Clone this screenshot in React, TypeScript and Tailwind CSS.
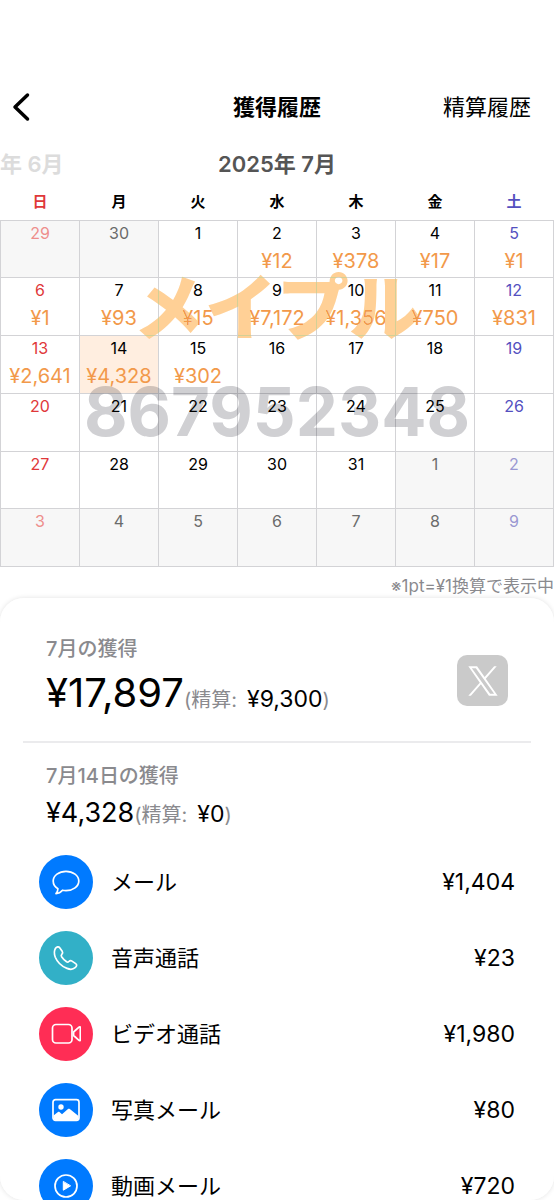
import { useState } from 'react';
import type { ReactNode } from 'react';

const WEEKDAYS = ['日', '月', '火', '水', '木', '金', '土'];

const WEEKS = [
  [29, 30, 1, 2, 3, 4, 5],
  [6, 7, 8, 9, 10, 11, 12],
  [13, 14, 15, 16, 17, 18, 19],
  [20, 21, 22, 23, 24, 25, 26],
  [27, 28, 29, 30, 31, 1, 2],
  [3, 4, 5, 6, 7, 8, 9],
];

const EARNINGS: Record<number, number> = {
  2: 12, 3: 378, 4: 17, 5: 1, 6: 1, 7: 93, 8: 15, 9: 7172,
  10: 1356, 11: 750, 12: 831, 13: 2641, 14: 4328, 15: 302,
};

interface Category {
  label: string;
  amount: number;
  color: string;
  icon: ReactNode;
}

const iconProps = {
  viewBox: '0 0 30 30',
  fill: 'none',
  stroke: 'white',
  strokeWidth: 1.7,
  strokeLinecap: 'round' as const,
  strokeLinejoin: 'round' as const,
  className: 'w-[30px] h-[30px]',
  'aria-hidden': true,
};

const CATEGORIES: Category[] = [
  {
    label: 'メール',
    amount: 1404,
    color: 'bg-[#007aff]',
    icon: (
      <svg {...iconProps}>
        <path d="M15 4.300c7 0 12.800 4.200 12.800 9.700S22 23.600 15 23.600c-1.200 0-2.400-.1-3.500-.4-1.600 1.900-3.600 3.200-6.500 3.400 1.200-1.300 1.900-2.800 1.900-4.900C4 20 2.200 17.200 2.200 14 2.200 8.500 8 4.300 15 4.300z" />
      </svg>
    ),
  },
  {
    label: '音声通話',
    amount: 23,
    color: 'bg-[#32b0c7]',
    icon: (
      <svg {...iconProps}>
        <path d="M4.300 5.600c1.200-1.700 3.300-2.500 4.400-.9l2.500 3.600c.8 1.200.5 2.200-.4 3.100-.8.8-.8 1.400-.2 2.400 1.300 2 3 3.700 5 5 1 .6 1.500.5 2.300-.3.900-.9 1.900-1.200 3.100-.4l3.700 2.500c1.600 1.100 1 2.800-.6 4.100-1.800 1.600-4.800 2.100-8.100.7-5.700-2.300-9.800-6.600-11.700-11.200-1.200-3.200-1.200-6.400 0-8.600z" />
      </svg>
    ),
  },
  {
    label: 'ビデオ通話',
    amount: 1980,
    color: 'bg-[#ff2d55]',
    icon: (
      <svg {...iconProps}>
        <rect x="1.500" y="5.500" width="19.500" height="18.500" rx="3.500" />
        <path d="M22.600 13l5.400-4.900c.6-.5 1.300-.3 1.300.6v12.100c0 .9-.7 1.100-1.300.6L22.600 16.500z" />
      </svg>
    ),
  },
  {
    label: '写真メール',
    amount: 80,
    color: 'bg-[#007aff]',
    icon: (
      <svg {...iconProps}>
        <rect x="2" y="4.700" width="26" height="20.600" rx="2.500" />
        <circle cx="10" cy="12" r="2.700" fill="white" stroke="none" />
        <path d="M2.500 20.500l4.500-3.500c.5-.4 1-.3 1.500 0l2.500 2.200 6-5.200c.6-.5 1.200-.5 1.800 0l8.700 7V23a2 2 0 0 1-2 2h-21a2 2 0 0 1-2-2z" fill="white" stroke="none" />
      </svg>
    ),
  },
  {
    label: '動画メール',
    amount: 720,
    color: 'bg-[#007aff]',
    icon: (
      <svg {...iconProps}>
        <circle cx="15" cy="15" r="11" />
        <path d="M12.300 10.800v8.400l7-4.200z" fill="white" strokeWidth="1" />
      </svg>
    ),
  },
];

const yen = (value: number) => `¥${value.toLocaleString('en-US')}`;

const getDayColor = (weekday: number, outside: boolean) => {
  if (weekday === 0) return outside ? 'text-[#ee8e8c]' : 'text-[#e0383a]';
  if (weekday === 6) return outside ? 'text-[#9a98d2]' : 'text-[#5450bf]';
  return outside ? 'text-[#6b6b6b]' : 'text-black';
};

function Calendar({ selected, onSelect }: { selected: number; onSelect: (day: number) => void }) {
  return (
    <div className="relative">
      <table className="w-full h-[386px] table-fixed border-collapse">
        <thead>
          <tr>
            {WEEKDAYS.map((name, i) => (
              <th key={name} scope="col" className={`h-[39px] pt-1 text-[15px] font-bold ${getDayColor(i, false)}`}>
                {name}
              </th>
            ))}
          </tr>
        </thead>
        <tbody>
          {WEEKS.map((week, row) => (
            <tr key={row}>
              {week.map((day, col) => {
                const outside = (row === 0 && day > 7) || (row > 3 && day < 15);
                const active = !outside && day === selected;
                const bg = outside ? 'bg-[#f7f7f7]' : active ? 'bg-[#ffeee0]' : 'bg-white';
                return (
                  <td key={col} className={`border border-[#d3d3d6] p-0 align-top ${bg}`}>
                    <button
                      onClick={() => onSelect(day)}
                      disabled={outside}
                      className={`block w-full text-center text-base leading-6 ${getDayColor(col, outside)}`}
                    >
                      {day}
                      <span className="block h-8 text-[20px] leading-8 text-[#f2994a]">
                        {!outside && EARNINGS[day] ? yen(EARNINGS[day]) : ''}
                      </span>
                    </button>
                  </td>
                );
              })}
            </tr>
          ))}
        </tbody>
      </table>

      {/* owner watermark */}
      <div className="pointer-events-none absolute inset-x-0 top-[87px] flex flex-col items-center">
        <p className="text-[72px] leading-[80px] font-black text-[#ffd096] mix-blend-darken">メイプル</p>
        <p className="mt-6 text-[67px] leading-[80px] font-bold text-[#d0d0d3] mix-blend-multiply">867952348</p>
      </div>
    </div>
  );
}

export default function App() {
  const [selected, setSelected] = useState(14);

  return (
    <div className="flex h-screen flex-col overflow-hidden bg-white font-['Inter','Noto_Sans_CJK_JP',sans-serif] text-black">
      <header className="mt-[83px] grid shrink-0 grid-cols-[1fr_auto_1fr] items-center px-[23px] h-12">
        <button aria-label="戻る" className="-ml-3 justify-self-start">
          <svg viewBox="0 0 20 32" className="h-8 w-5" fill="none" stroke="currentColor" strokeWidth="3.500" strokeLinecap="round" strokeLinejoin="round">
            <path d="M16.500 4L4 16l12.500 12" />
          </svg>
        </button>
        <h1 className="text-[22px] font-bold">獲得履歴</h1>
        <button className="justify-self-end text-[22px]">精算履歴</button>
      </header>

      <div className="grid h-[50px] shrink-0 grid-cols-[1fr_auto_1fr] items-center pt-4 text-[22px] font-semibold">
        <span className="text-[#dcdcdc]">年 6月</span>
        <h2 className="text-[#555555]">2025年 7月</h2>
        <span />
      </div>

      <Calendar selected={selected} onSelect={setSelected} />

      <p className="shrink-0 pt-[7px] text-right text-[17px] leading-6 text-[#8a8a8e]">※1pt=¥1換算で表示中</p>

      <main className="min-h-0 flex-1 overflow-y-auto rounded-[24px] bg-white px-[23px] shadow-[0_0_5px_rgba(0,0,0,0.12)] [scrollbar-width:none]">
        <section className="flex items-center justify-between border-b-2 border-[#ebebed] px-[23px] pt-[35px] pb-[13px]">
          <div>
            <h3 className="text-[20px] leading-8 font-medium text-[#8a8a8e]">7月の獲得</h3>
            <p className="flex items-baseline text-[20px] leading-[56px] text-[#8a8a8e]">
              <span className="text-[40px] text-black">{yen(17897)}</span>
              <span>(精算:</span>
              <span className="ml-2.5 text-[23px] text-black">{yen(9300)}</span>
              <span>)</span>
            </p>
          </div>
          <button aria-label="Xでシェア" className="flex h-[51px] w-[51px] items-center justify-center rounded-[10px] bg-[#cacaca] text-white">
            <svg viewBox="0 0 24 24" className="h-8 w-8" fill="currentColor" aria-hidden="true">
              <path d="M14.095 10.317 22.286 1h-1.940l-7.115 8.088L7.551 1H1l8.590 12.231L1 23h1.940l7.512-8.543L16.449 23H23zM3.640 2.432h2.980l13.727 19.208h-2.980z" />
            </svg>
          </button>
        </section>

        <section className="px-[23px] pt-[17px]">
          <h3 className="text-[20px] leading-8 font-medium text-[#8a8a8e]">7月{selected}日の獲得</h3>
          <p className="flex items-baseline text-[20px] leading-[42px] text-[#8a8a8e]">
            <span className="text-[27px] text-black">{yen(EARNINGS[selected] ?? 0)}</span>
            <span>(精算:</span>
            <span className="ml-2.5 text-[23px] text-black">{yen(0)}</span>
            <span>)</span>
          </p>
        </section>

        <ul className="px-4 pt-2 pb-6">
          {CATEGORIES.map((item) => (
            <li key={item.label} className="flex h-[76px] items-center text-[22px]">
              <span className={`flex h-[54px] w-[54px] shrink-0 items-center justify-center rounded-full ${item.color}`}>
                {item.icon}
              </span>
              <span className="ml-[18px] flex-1">{item.label}</span>
              <span className="text-[23px]">{yen(item.amount)}</span>
            </li>
          ))}
        </ul>
      </main>
    </div>
  );
}
